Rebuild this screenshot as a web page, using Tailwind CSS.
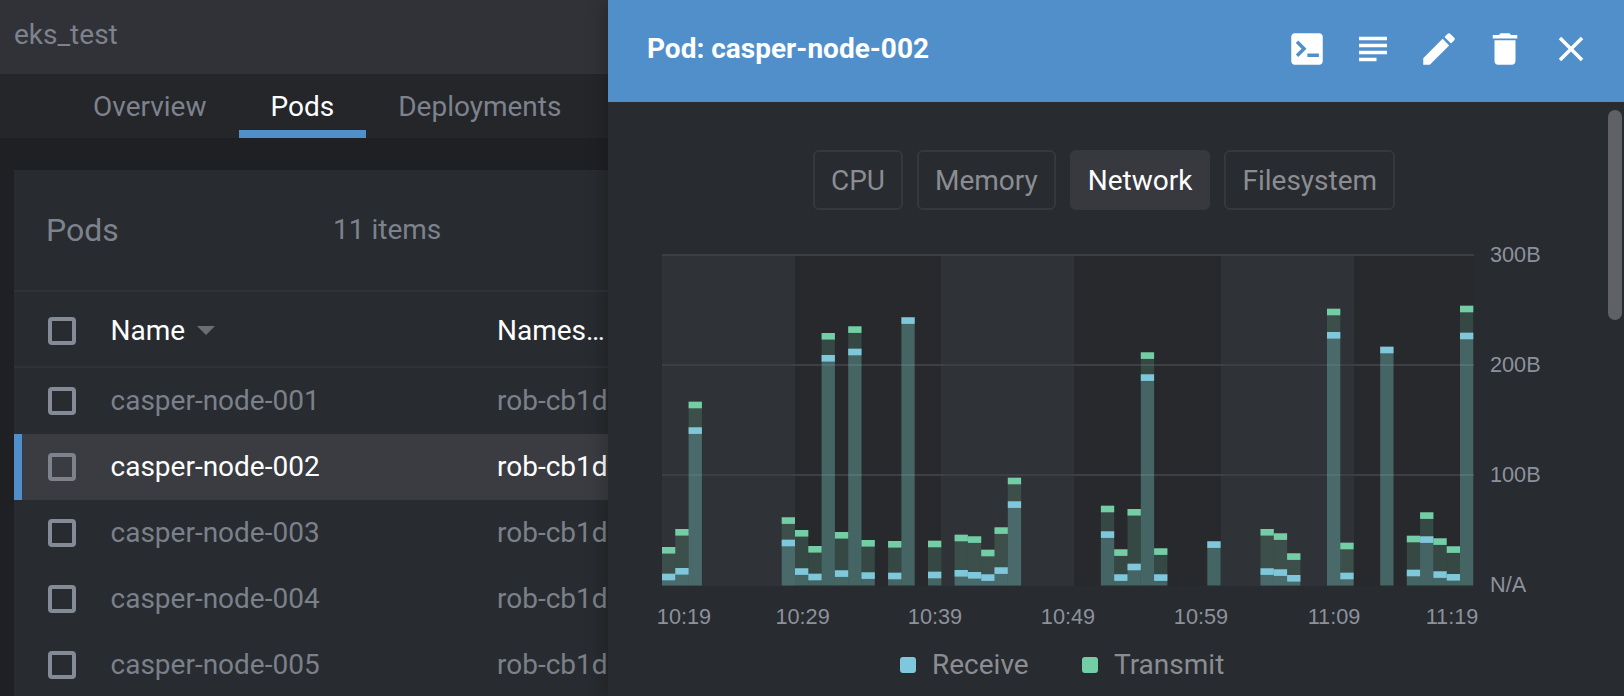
<!DOCTYPE html>
<html lang="en">
<head>
    <meta charset="UTF-8">
    <title>Pod: casper-node-002</title>
    <script src="https://cdn.jsdelivr.net/npm/@tailwindcss/browser@4"></script>
</head>
<body class="h-screen overflow-hidden flex bg-[#1f2024] font-['Roboto',sans-serif]">
    <!-- Cluster page behind the drawer -->
    <div class="w-[608px] shrink-0 overflow-hidden">
        <div class="h-[74px] flex items-center pl-[14px] pb-1 bg-[#303238] text-[28px] text-[#7d828d]">eks_test</div>
        <div class="h-[64px] flex pl-[61px] bg-[#24262a] text-[28px] text-[#7d828d] whitespace-nowrap">
            <div class="px-[32px] pt-[12px]">Overview</div>
            <div class="px-[32px] pt-[12px] text-white border-b-8 border-[#518fcb]">Pods</div>
            <div class="px-[32px] pt-[12px]">Deployments</div>
        </div>

        <div class="mt-[32px] ml-[14px] w-[700px] bg-[#282b2f]">
            <div class="h-[122px] flex items-center pl-[32px] text-[#7d828d] border-b-2 border-[#303238]">
                <span class="text-[32px] w-[287px]">Pods</span>
                <span class="text-[28px]">11 items</span>
            </div>
            <div class="h-[76px] flex items-center pl-[34px] pt-[3px] text-[28px] text-white border-b-2 border-[#303238]">
                <span class="w-7 h-7 border-4 border-[#858a97] rounded"></span>
                <span class="ml-[34.5px] w-[386.5px] flex items-center gap-3">Name <span class="w-0 h-0 border-x-[9px] border-x-transparent border-t-[9px] border-t-[#6c6e72]"></span></span>
                <span class="w-[111px] truncate">Names…</span>
            </div>
            <div class="h-[66px] flex items-center pl-[34px] text-[28px] text-[#7b808b]">
                <span class="w-7 h-7 border-4 border-[#858a97] rounded"></span>
                <span class="ml-[34.5px] w-[386.5px]">casper-node-001</span><span>rob-cb1d</span>
            </div>
            <div class="h-[66px] flex items-center pl-[26px] text-[28px] text-white bg-[#3a3c41] border-l-8 border-[#518fcb]">
                <span class="w-7 h-7 border-4 border-[#7d828d] rounded"></span>
                <span class="ml-[34.5px] w-[386.5px]">casper-node-002</span><span>rob-cb1d</span>
            </div>
            <div class="h-[66px] flex items-center pl-[34px] text-[28px] text-[#7b808b]">
                <span class="w-7 h-7 border-4 border-[#858a97] rounded"></span>
                <span class="ml-[34.5px] w-[386.5px]">casper-node-003</span><span>rob-cb1d</span>
            </div>
            <div class="h-[66px] flex items-center pl-[34px] text-[28px] text-[#7b808b]">
                <span class="w-7 h-7 border-4 border-[#858a97] rounded"></span>
                <span class="ml-[34.5px] w-[386.5px]">casper-node-004</span><span>rob-cb1d</span>
            </div>
            <div class="h-[66px] flex items-center pl-[34px] text-[28px] text-[#7b808b]">
                <span class="w-7 h-7 border-4 border-[#858a97] rounded"></span>
                <span class="ml-[34.5px] w-[386.5px]">casper-node-005</span><span>rob-cb1d</span>
            </div>
        </div>
    </div>

    <!-- Pod drawer -->
    <div class="relative w-[1016px] shrink-0 bg-[#282b2f] shadow-[-6px_0_16px_rgba(0,0,0,0.18)]">
        <div class="h-[102px] flex items-center justify-between pl-[39px] pr-[32px] pb-1 bg-[#518fcb] text-white">
            <span class="text-[28px] font-bold">Pod: casper-node-002</span>
            <div class="flex gap-[24px]">
                <svg class="w-[42px] h-[42px]" viewBox="0 0 24 24" fill="currentColor"><path fill-rule="evenodd" d="M19 3H5c-1.1 0-2 .9-2 2v14c0 1.1.9 2 2 2h14c1.1 0 2-.9 2-2V5c0-1.1-.9-2-2-2zM7 7.1 5.6 8.5 8.9 11.8 5.6 15.1 7 16.5 11.7 11.8zM12.2 14.6v2h6.6v-2z"/></svg>
                <svg class="w-[42px] h-[42px]" viewBox="0 0 24 24" fill="currentColor"><path d="M14 17H4v2h10v-2zm6-8H4v2h16V9zM4 15h16v-2H4v2zM4 5v2h16V5H4z"/></svg>
                <svg class="w-[42px] h-[42px]" viewBox="0 0 24 24" fill="currentColor"><path d="M3 17.25V21h3.75L17.81 9.94l-3.75-3.75L3 17.25zM20.71 7.04c.39-.39.39-1.02 0-1.41l-2.34-2.34c-.39-.39-1.02-.39-1.41 0l-1.83 1.83 3.75 3.75 1.83-1.83z"/></svg>
                <svg class="w-[42px] h-[42px]" viewBox="0 0 24 24" fill="currentColor"><path d="M6 19c0 1.1.9 2 2 2h8c1.1 0 2-.9 2-2V7H6v12zM19 4h-3.5l-1-1h-5l-1 1H5v2h14V4z"/></svg>
                <svg class="w-[42px] h-[42px]" viewBox="0 0 24 24" fill="currentColor"><path d="M19 6.41 17.59 5 12 10.59 6.41 5 5 6.41 10.59 12 5 17.59 6.41 19 12 13.41 17.59 19 19 17.59 13.41 12z"/></svg>
            </div>
        </div>

        <div class="w-[992px]">
            <div class="mt-[48px] flex justify-center gap-[14px] text-[28px] text-[#8b8d92]">
                <div class="h-[60px] px-[16px] pt-[1px] flex items-center border-2 border-[#36383e] rounded-md">CPU</div>
                <div class="h-[60px] px-[16px] pt-[1px] flex items-center border-2 border-[#36383e] rounded-md">Memory</div>
                <div class="h-[60px] px-[16px] pt-[1px] flex items-center border-2 border-[#37393f] bg-[#37393f] text-white rounded-md">Network</div>
                <div class="h-[60px] px-[16px] pt-[1px] flex items-center border-2 border-[#36383e] rounded-md">Filesystem</div>
            </div>

            <!-- viewBox uses page coordinates -->
            <svg id="chart" class="mt-[30px] block font-['Liberation_Sans',sans-serif] text-[21.7px] fill-[#8d919c]" width="992" height="400" viewBox="608 240 992 400"></svg>

            <div class="mt-[9px] ml-[292px] flex items-center text-[28px] text-[#8b8d92] leading-8">
                <span class="w-4 h-4 rounded-[3px] bg-[#7fc7da]"></span>
                <span class="ml-[16px] w-[150px]">Receive</span>
                <span class="w-4 h-4 rounded-[3px] bg-[#73cea6]"></span>
                <span class="ml-[16px]">Transmit</span>
            </div>
        </div>

        <div class="absolute left-[1000px] top-[110px] w-[14px] h-[210px] rounded-full bg-[#5f6166]"></div>
    </div>

    <script>
        // [bar index, transmit top, receive top] - transmit null where it hides behind receive
        const bars = [
            [0,547,573.7],[1,529,568],[2,401.7,427.3],
            [9,517.3,539.7],[10,530,568.3],[11,546,573.7],[12,333,355],[13,532,570.3],[14,326.3,348.7],[15,540,572.3],
            [17,541,572.7],[18,null,317.3],[20,540.7,571.7],
            [22,534.7,570],[23,536.3,572],[24,549.7,574.3],[25,527.3,567.3],[26,477.7,501.3],
            [33,505.7,531.3],[34,549.3,574.3],[35,509,563.7],[36,352.3,374.3],[37,548.3,574.3],
            [41,null,541.3],[45,529,568.3],[46,533.3,569.3],[47,553.3,575],
            [50,308.7,332],[51,542.7,572.7],[54,null,346.7],
            [56,535.7,569.7],[57,512.3,536.3],[58,538.3,571.3],[59,546.3,574],[60,305.7,332.7]
        ];
        const ticks = [[684,'10:19'],[802.6,'10:29'],[935,'10:39'],[1068,'10:49'],[1201,'10:59'],[1334,'11:09'],[1452,'11:19']];
        const axis = [[255,'300B'],[365,'200B'],[475,'100B'],[585,'N/A']];
        const BASE = 585.5, STEP = 13.3, BLUE = '#7fc7da', GREEN = '#73cea6';
        let svg = '';

        // time bands
        [[662,795],[941,1074],[1221,1354]].forEach(b => {
            svg += `<rect x="${b[0]}" y="255" width="${b[1]-b[0]}" height="331" fill="#2f3237"/>`;
        });
        [[795,941],[1074,1221],[1354,1474]].forEach(b => {
            svg += `<rect x="${b[0]}" y="256" width="${b[1]-b[0]}" height="330" fill="#27292d"/>`;
        });
        [255,365,475].forEach(y => {
            svg += `<rect x="662" y="${y-1}" width="812" height="2" fill="#3d3f44"/>`;
        });

        const body = (x, top, color, alpha) =>
            `<rect x="${x}" y="${top}" width="${STEP}" height="${BASE-top}" fill="${color}" fill-opacity="${alpha}"/>`;
        const strip = (x, top, color) =>
            `<rect x="${x}" y="${top}" width="${STEP}" height="6.6" fill="${color}"/>`;
        bars.forEach(b => {
            const x = 662 + b[0] * STEP;
            if (b[1] !== null) svg += body(x, b[1], GREEN, 0.19) + strip(x, b[1], GREEN);
            else svg += body(x, b[2], GREEN, 0.19);
            svg += body(x, b[2], BLUE, 0.22) + strip(x, b[2], BLUE);
        });

        ticks.forEach(t => { svg += `<text x="${t[0]}" y="624" text-anchor="middle">${t[1]}</text>`; });
        axis.forEach(a => { svg += `<text x="1490" y="${a[0]+7}">${a[1]}</text>`; });
        document.getElementById('chart').innerHTML = svg;
    </script>
</body>
</html>
